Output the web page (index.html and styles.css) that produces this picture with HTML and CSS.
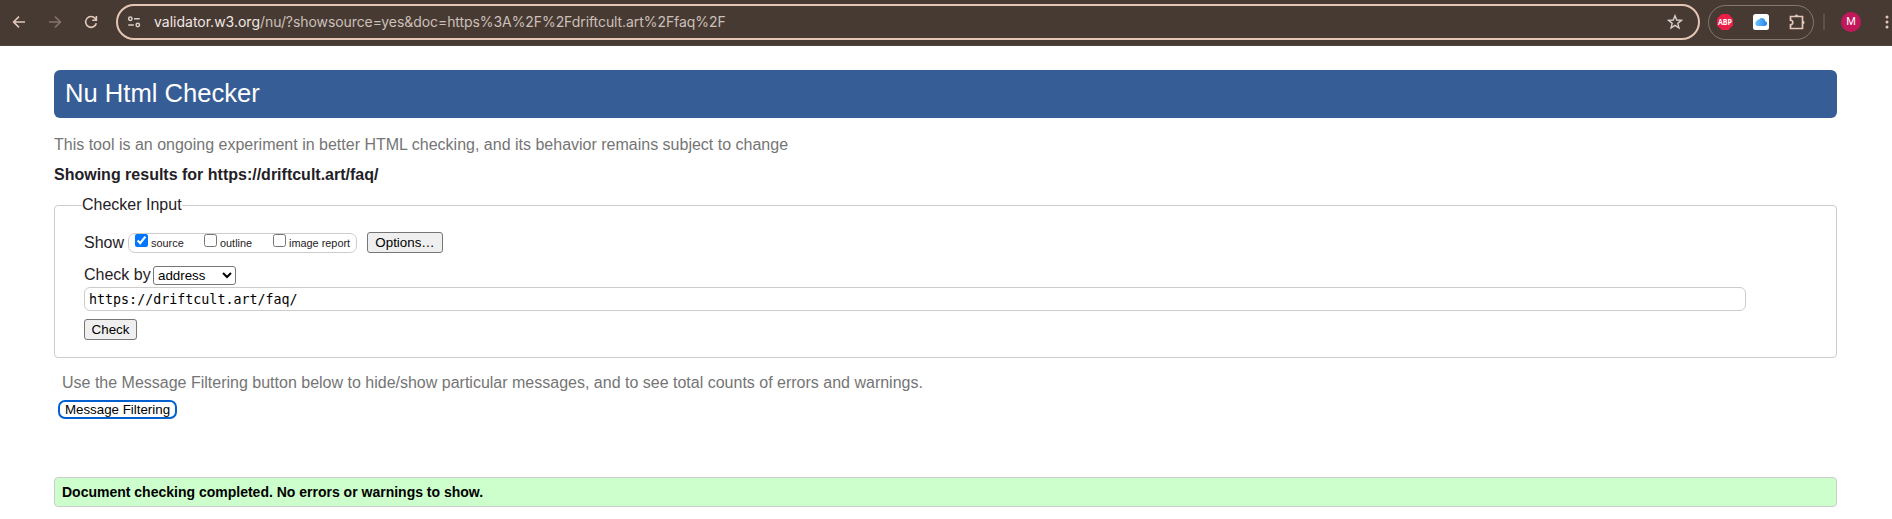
FILE: index.html
```html
<!DOCTYPE html>
<html lang="en">
<head>
<meta charset="utf-8">
<title>Nu Html Checker</title>
<link rel="stylesheet" href="styles.css">
</head>
<body>
<header class="toolbar">
  <nav class="nav">
    <svg width="16" height="16" viewBox="0 0 16 16" class="icon"><path d="M14 8H2.6M8 2.6L2.6 8L8 13.4"/></svg>
    <svg width="16" height="16" viewBox="0 0 16 16" class="icon dim"><path d="M2 8h11.4M8 2.6L13.400 8L8 13.4"/></svg>
    <svg width="16" height="16" viewBox="0 0 16 16" class="icon"><path d="M13.300 9.200A5.400 5.400 0 1 1 12.200 4.500L13.300 5.800M13.400 2v4.300H9.200"/></svg>
  </nav>
  <div class="omnibox">
    <svg width="14" height="14" viewBox="0 0 14 14" class="icon tune"><circle cx="3.300" cy="3.700" r="1.700"/><path d="M7 3.700h5.700M1.300 10h5.500"/><circle cx="10.800" cy="10" r="1.700"/></svg>
    <span class="url"><b>validator.w3.org</b>/nu/?showsource=yes&amp;doc=https%3A%2F%2Fdriftcult.art%2Ffaq%2F</span>
    <svg width="16" height="16" viewBox="0 0 16 16" class="icon star"><path d="M8 1.700L9.750 6.050L14.400 6.350L10.800 9.350L12 13.900L8 11.400L4 13.900L5.200 9.350L1.600 6.350L6.250 6.050Z"/></svg>
  </div>
  <div class="extensions">
    <svg width="16" height="16" viewBox="0 0 16 16" class="badge"><path d="M4.700 0h6.600L16 4.700v6.600L11.300 16H4.700L0 11.300V4.700z" fill="#ed1e45"/><text x="8" y="11" class="abp" textLength="14" lengthAdjust="spacingAndGlyphs">ABP</text></svg>
    <svg width="16" height="16" viewBox="0 0 16 16"><defs><linearGradient id="sky" x1="0" x2="1"><stop offset="0" stop-color="#6fc6fb"/><stop offset="1" stop-color="#2581f0"/></linearGradient></defs><rect width="16" height="16" rx="2.500" fill="#fff"/><path d="M4.500 12A2.700 2.700 0 0 1 4 6.800A1.900 1.900 0 0 1 6.200 5.500A3.400 3.400 0 0 1 12.300 7.300A2.400 2.400 0 0 1 12 12z" fill="url(#sky)"/></svg>
    <svg width="18" height="18" viewBox="0 0 18 18" class="icon puzzle"><path d="M2.500 3.500H14.500V15.500H2.500V11.800A2.300 2.300 0 0 0 2.500 7.200Z"/><path d="M7 3.200a1.500 1.500 0 0 1 3 0zM14.800 8a1.500 1.500 0 0 1 0 3z" class="knob"/></svg>
  </div>
  <span class="divider"></span>
  <span class="avatar">M</span>
  <svg width="4" height="16" viewBox="0 0 4 16" class="dots"><circle cx="2" cy="3" r="1.500"/><circle cx="2" cy="8" r="1.500"/><circle cx="2" cy="13" r="1.500"/></svg>
</header>
<main class="page">
  <h1 class="title">Nu Html Checker</h1>
  <p class="note">This tool is an ongoing experiment in better HTML checking, and its behavior remains subject to change</p>
  <h2 class="results">Showing results for https://driftcult.art/faq/</h2>
  <fieldset class="checker">
    <legend class="legend">Checker Input</legend>
    <div class="row show">
      <span class="label">Show</span>
      <div class="checks">
        <label class="check"><input type="checkbox" class="box" checked><span>source</span></label>
        <label class="check"><input type="checkbox" class="box"><span>outline</span></label>
        <label class="check"><input type="checkbox" class="box"><span>image report</span></label>
      </div>
      <button class="button options">Options…</button>
    </div>
    <div class="row by">
      <span class="label">Check by</span>
      <select class="select"><option>address</option></select>
    </div>
    <input class="address" type="text" value="https://driftcult.art/faq/" spellcheck="false">
    <button class="button submit">Check</button>
  </fieldset>
  <p class="note hint">Use the Message Filtering button below to hide/show particular messages, and to see total counts of errors and warnings.</p>
  <button class="filtering">Message Filtering</button>
  <p class="success">Document checking completed. No errors or warnings to show.</p>
</main>
</body>
</html>
```
FILE: styles.css
```css
* { box-sizing: border-box; }
body {
  margin: 0;
  height: 519px;
  overflow: hidden;
  background: #fff;
  color: #1f2126;
  font: 16px/20px "Liberation Sans", Arial, sans-serif;
}
.toolbar {
  display: flex;
  align-items: center;
  height: 46px;
  padding-bottom: 1px;
  background: #473a33;
  border-bottom: 1px solid #51463f;
}
.nav { display: flex; gap: 20px; width: 116px; padding-left: 11px; }
.icon { flex: none; fill: none; stroke: #e3c8ba; stroke-width: 1.6; }
.dim { stroke: #84736a; }
.omnibox {
  display: flex;
  align-items: center;
  width: 1584px;
  height: 36px;
  padding: 0 15px 0 9px;
  border: 2px solid #e5c5b4;
  border-radius: 18px;
}
.tune { stroke: #d8cec9; stroke-width: 1.5; }
.url {
  flex: 1;
  margin-left: 13px;
  color: #cbc0ba;
  font: 14px/20px Inter, sans-serif;
  letter-spacing: -0.075px;
  white-space: nowrap;
}
.url b { font-weight: 400; color: #f1e8e4; letter-spacing: 0; }
.star { stroke: #d8cec9; stroke-width: 1.4; }
.extensions {
  display: flex;
  align-items: center;
  gap: 20px;
  width: 106px;
  height: 35px;
  margin-left: 8px;
  padding-left: 8px;
  border: 1px solid #83776f;
  border-radius: 18px;
}
.extensions svg { flex: none; }
.badge { overflow: visible; }
.abp { fill: #fff; font: bold 8.5px "Open Sans", sans-serif; text-anchor: middle; }
.puzzle { stroke-width: 1.7; margin-left: -1px; }
.knob { fill: #e3c8ba; stroke-width: .5; }
.divider { width: 2px; height: 16px; margin-left: 9px; background: #5f4f46; }
.avatar {
  width: 20px;
  height: 20px;
  margin-left: 16px;
  border-radius: 50%;
  background: #c2185b;
  color: #fff;
  font: 11px/20px Roboto, sans-serif;
  text-align: center;
}
.dots { margin-left: 24px; fill: #e3c8ba; }
.page { display: flex; flex-direction: column; align-items: flex-start; padding: 24px 55px 0 54px; }
.title {
  align-self: stretch;
  height: 48px;
  margin: 0 0 17px;
  padding-left: 11px;
  border-radius: 6px;
  background: #365d95;
  color: #fff;
  font-size: 25.6px;
  font-weight: 400;
  line-height: 46px;
}
.note { margin: 0; color: #757575; }
.results { margin: 10px 0; font-size: 16px; line-height: 20px; }
.checker {
  align-self: stretch;
  display: flex;
  flex-direction: column;
  align-items: flex-start;
  height: 163px;
  margin: 0;
  padding: 17px 0 0 29px;
  border: 1px solid #ccc;
  border-radius: 4px;
}
.legend { margin-left: -2px; padding: 0; }
.row { display: flex; }
.show { height: 33px; }
.label { line-height: 20px; }
.show .label { width: 44px; line-height: 21px; }
.by .label { width: 69px; }
.checks {
  display: flex;
  width: 229px;
  height: 20px;
  margin: 1px 10px 0 0;
  padding-left: 6px;
  border: 1px solid #ccc;
  border-radius: 7px;
}
.check { display: flex; width: 69px; font-size: 10.9px; line-height: 19px; white-space: nowrap; }
.box { flex: none; width: 13px; height: 13px; margin: 0 3px 0 0; }
.button {
  height: 21px;
  padding: 0;
  border: 1px solid #767676;
  border-radius: 3px;
  background: #efefef;
  color: #000;
  font: 13.333px/17px "Liberation Sans", Arial, sans-serif;
}
.options { width: 76px; }
.select {
  width: 83px;
  height: 19px;
  margin-top: 1px;
  border: 1px solid #767676;
  border-radius: 3px;
  background: #fff;
  color: #000;
  font: 13.333px "Liberation Sans", Arial, sans-serif;
}
.by { height: 22px; }
.address {
  width: 1662px;
  height: 24px;
  margin: 0 0 8px;
  padding: 0 4px;
  border: 1px solid #ccc;
  border-radius: 6px;
  color: #000;
  font: 13.333px "DejaVu Sans Mono", monospace;
}
.submit { width: 53px; }
.hint { margin: 15px 0 7px 8px; }
.filtering {
  width: 119px;
  height: 19px;
  margin-left: 4px;
  padding: 0;
  border: 2px solid #0060d0;
  border-radius: 7px;
  background: #fff;
  color: #000;
  font: 13.333px/15px "Liberation Sans", Arial, sans-serif;
}
.success {
  align-self: stretch;
  height: 30px;
  margin: 58px 0 0;
  padding-left: 7px;
  border: 1px solid #ccc;
  border-radius: 4px;
  background: #cfc;
  color: #000;
  font-size: 14px;
  font-weight: 700;
  line-height: 28px;
}
```
